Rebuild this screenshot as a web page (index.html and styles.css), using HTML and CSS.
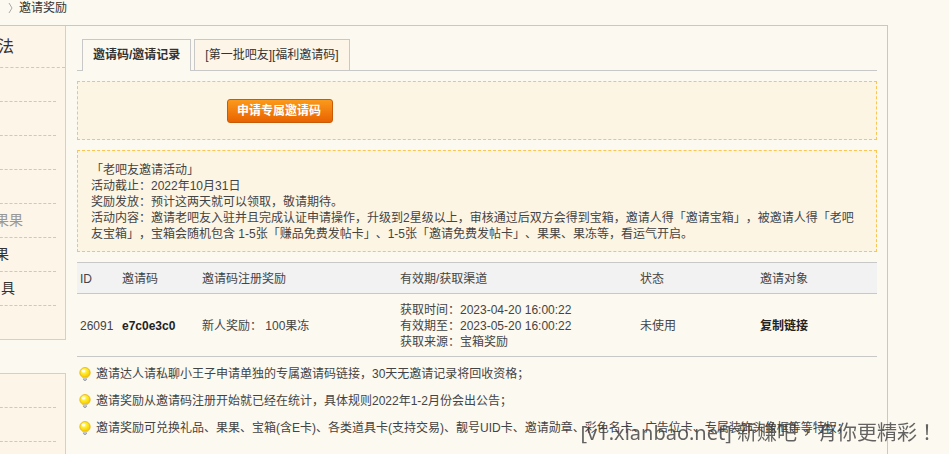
FILE: index.html
```html
<!DOCTYPE html>
<html lang="zh-CN">
<head>
  <meta charset="UTF-8">
  <meta name="viewport" content="width=device-width, initial-scale=1.0">
  <title>邀请奖励</title>
  <link rel="stylesheet" href="styles.css">
</head>
<body>
  <div class="breadcrumb">
    <svg class="arrow" viewBox="0 0 5 12"><path d="M1 1l3 5-3 5" fill="none" stroke="#aaa"/></svg>
    <span>邀请奖励</span>
  </div>

  <div class="wrap">
    <div class="sidebar">
      <div class="side-box">
        <h2>法</h2>
        <ul>
          <li></li>
          <li></li>
          <li></li>
          <li></li>
          <li><a href="#" class="current">果果</a></li>
          <li><a href="#">果</a></li>
          <li><a href="#" class="indent">具</a></li>
        </ul>
      </div>
      <div class="side-box">
        <ul>
          <li></li>
          <li></li>
        </ul>
      </div>
    </div>

    <div class="main">
      <div class="tabs">
        <a href="#" class="tab active">邀请码/邀请记录</a>
        <a href="#" class="tab">[第一批吧友][福利邀请码]</a>
      </div>

      <div class="notice apply">
        <button type="button" class="apply-btn">申请专属邀请码</button>
      </div>

      <div class="notice">
        「老吧友邀请活动」<br>
        活动截止：2022年10月31日<br>
        奖励发放：预计这两天就可以领取，敬请期待。<br>
        活动内容：邀请老吧友入驻并且完成认证申请操作，升级到2星级以上，审核通过后双方会得到宝箱，邀请人得「邀请宝箱」，被邀请人得「老吧友宝箱」，宝箱会随机包含 1-5张「赚品免费发帖卡」、1-5张「邀请免费发帖卡」、果果、果冻等，看运气开启。
      </div>

      <table class="codes">
        <thead>
          <tr>
            <th class="col-id">ID</th>
            <th class="col-code">邀请码</th>
            <th class="col-reward">邀请码注册奖励</th>
            <th class="col-date">有效期/获取渠道</th>
            <th class="col-state">状态</th>
            <th>邀请对象</th>
          </tr>
        </thead>
        <tbody>
          <tr>
            <td>26091</td>
            <td><strong>e7c0e3c0</strong></td>
            <td>新人奖励： 100果冻</td>
            <td>获取时间：2023-04-20 16:00:22<br>有效期至：2023-05-20 16:00:22<br>获取来源：宝箱奖励</td>
            <td>未使用</td>
            <td><a href="#" class="copy">复制链接</a></td>
          </tr>
        </tbody>
      </table>

      <svg class="defs" width="0" height="0">
        <defs>
          <radialGradient id="glow" cx="40%" cy="35%" r="65%">
            <stop offset="0" stop-color="#fffcc0"/>
            <stop offset="0.4" stop-color="#ffee30"/>
            <stop offset="1" stop-color="#f8c800"/>
          </radialGradient>
        </defs>
        <symbol id="bulb" viewBox="0 0 12 14">
          <path d="M6 .5a5.200 5.200 0 0 0-5.200 5.200c0 2 1.200 3.200 2.700 4.600h5c1.500-1.400 2.700-2.600 2.700-4.600A5.200 5.200 0 0 0 6 .5z" fill="url(#glow)" stroke="#e6b00c" stroke-width=".8"/>
          <path d="M4 10.300h4v1.500L7 13.300H5l-1-1.500z" fill="#c3c5c8"/>
          <path d="M4.200 12.200L5.200 13.400h1.600l1-1.200" fill="none" stroke="#777c85" stroke-width=".7"/>
          <ellipse cx="4.500" cy="3.900" rx="1.800" ry="1.500" fill="#fff" opacity=".85"/>
        </symbol>
      </svg>

      <ul class="tips">
        <li><svg class="bulb"><use href="#bulb"/></svg>邀请达人请私聊小王子申请单独的专属邀请码链接，30天无邀请记录将回收资格；</li>
        <li><svg class="bulb"><use href="#bulb"/></svg>邀请奖励从邀请码注册开始就已经在统计，具体规则2022年1-2月份会出公告；</li>
        <li><svg class="bulb"><use href="#bulb"/></svg>邀请奖励可兑换礼品、果果、宝箱(含E卡)、各类道具卡(支持交易)、靓号UID卡、邀请勋章、彩色名卡、广告位卡、专属装饰头像框等等特权；</li>
      </ul>
    </div>
  </div>

  <div class="watermark" lang="zh-TW">[v1.xianbao.net] 新赚吧，有你更精彩！</div>
</body>
</html>
```
FILE: styles.css
```css
* {
  box-sizing: border-box;
}

body {
  margin: 0;
  min-height: 100vh;
  display: flex;
  flex-direction: column;
  position: relative;
  overflow-x: hidden;
  background-color: #fcf9f0;
  color: #444;
  font: 12px/16px "Liberation Sans", "Noto Sans CJK SC", sans-serif;
  text-spacing-trim: space-all;
}

a {
  color: #333;
  text-decoration: none;
}

ul {
  margin: 0;
  padding: 0;
  list-style: none;
}

/* breadcrumb */
.breadcrumb {
  display: flex;
  align-items: center;
  gap: 6px;
  height: 25px;
  padding: 0 0 9px 8px;
  color: #333;
}

.arrow {
  width: 5px;
  height: 12px;
}

.wrap {
  display: flex;
  flex: 1;
  margin-right: 61px;
  border-top: 1px solid #c8c8c8;
  border-right: 1px solid #c8c8c8;
}

/* left menu */
.sidebar {
  flex: 0 0 71px;
  margin-left: -5px;
  display: flex;
  flex-direction: column;
  gap: 33px;
}

.side-box {
  background-color: #fdf5e7;
  border: 1px solid #d3d1c4;
  border-width: 1px 1px 1px 0;
  padding-bottom: 33px;
}

.side-box:first-child {
  border-top: 0;
}

.side-box:last-child {
  flex: 1;
  border-bottom: 0;
  padding-bottom: 0;
}

.side-box h2 {
  height: 42px;
  margin: 0;
  padding-left: 3px;
  border-bottom: 1px dashed #ccc9bd;
  color: #333;
  font-size: 16px;
  font-weight: normal;
  line-height: 42px;
}

.side-box li {
  height: 34px;
  margin-right: 9px;
  border-bottom: 1px dashed #ccc9bd;
  font-size: 14px;
  line-height: 32px;
}

.side-box .current {
  color: #999;
}

.side-box .indent {
  padding-left: 6px;
}

/* content */
.main {
  flex: 1;
  min-width: 0;
  padding: 13px 10px 0 11px;
}

.tabs {
  display: flex;
  gap: 3px;
  padding-left: 5px;
  border-bottom: 1px solid #c8c8c8;
}

.tab {
  height: 31px;
  padding: 0 10px;
  border: 1px solid #c8c8c8;
  border-bottom: 0;
  background-color: #fdf5e7;
  line-height: 31px;
}

.tab.active {
  height: 32px;
  margin-bottom: -1px;
  background-color: #fcf9f0;
  font-weight: bold;
}

.notice {
  margin-top: 10px;
  padding: 11px 13px 9px;
  border: 1px dashed #fcc552;
  background-color: #fdf5e4;
}

.notice.apply {
  padding: 17px 149px 16px;
}

.apply-btn {
  display: block;
  height: 24px;
  padding: 0 11px 0 9px;
  border: 1px solid #c85a08;
  border-radius: 3px;
  background: linear-gradient(#fb9a1c, #e96300);
  color: #fff;
  font: bold 12px/20px "Liberation Sans", "Noto Sans CJK SC", sans-serif;
  cursor: pointer;
}

.codes {
  width: 100%;
  margin-top: 10px;
  border-collapse: collapse;
  table-layout: fixed;
}

.codes th,
.codes td {
  padding: 8px 0 6px 3px;
  border-top: 1px solid #c8c8c8;
  border-bottom: 1px solid #c8c8c8;
  text-align: left;
}

.codes th {
  background-color: #f2f2f2;
  font-weight: normal;
}

.codes strong,
.copy {
  color: #222;
  font-weight: bold;
}

.col-id {
  width: 42px;
}

.col-code {
  width: 10%;
}

.col-reward {
  width: 198px;
}

.col-date {
  width: 30%;
}

.col-state {
  width: 15%;
}

.defs {
  display: block;
}

.tips {
  padding: 3px 0 0 2px;
}

.tips li {
  display: flex;
  align-items: center;
  gap: 5px;
  height: 27px;
  white-space: nowrap;
}

.bulb {
  flex: none;
  width: 12px;
  height: 14px;
}

.watermark {
  position: fixed;
  right: 12px;
  bottom: 7px;
  color: rgba(60, 60, 60, 0.8);
  font: 20px/28px "Noto Sans", "Noto Sans CJK TC", sans-serif;
  white-space: nowrap;
}
```
